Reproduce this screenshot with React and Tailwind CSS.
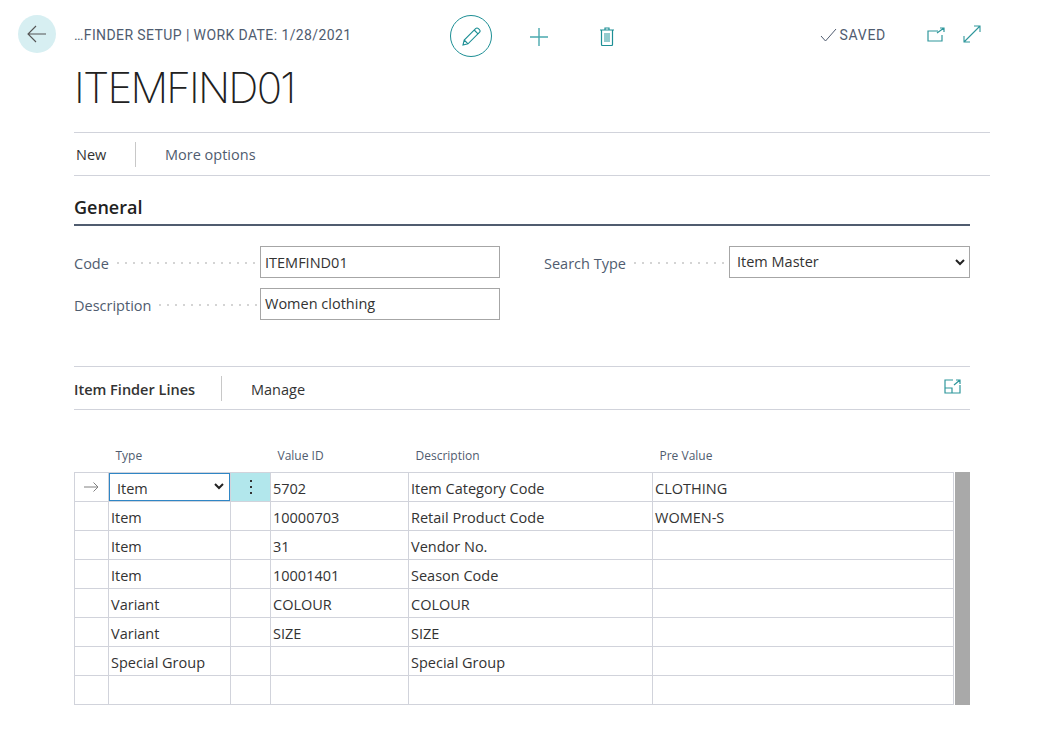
import React from 'react'

const teal = '#1d8f95'

// Filas de la tabla de lineas
const rows = [
    { type: 'Item', valueId: '10000703', description: 'Retail Product Code', pre: 'WOMEN-S' },
    { type: 'Item', valueId: '31', description: 'Vendor No.', pre: '' },
    { type: 'Item', valueId: '10001401', description: 'Season Code', pre: '' },
    { type: 'Variant', valueId: 'COLOUR', description: 'COLOUR', pre: '' },
    { type: 'Variant', valueId: 'SIZE', description: 'SIZE', pre: '' },
    { type: 'Special Group', valueId: '', description: 'Special Group', pre: '' },
    { type: '', valueId: '', description: '', pre: '' },
]

function Chevron() {
    return (
        <svg width="10" height="7" viewBox="0 0 10 7" fill="none" stroke="#222" strokeWidth="2">
            <path d="M1 1l4 4 4-4" />
        </svg>
    )
}

function Field({ label, children, labelWidth = 'w-[186px]' }) {
    return (
        <div className="flex items-center h-8">
            <div className={`${labelWidth} flex items-center shrink-0 pr-[3px] pt-[3px] text-[#505c6f]`}>
                <span className="pr-2">{label}</span>
                <span className="flex-1 h-[2px] -mt-0.5 bg-[linear-gradient(to_right,#d4d4d4_2px,transparent_2px)] bg-[length:8px_2px]"></span>
            </div>
            {children}
        </div>
    )
}

function Cell({ children, className = '' }) {
    return <td className={`h-[29px] p-0 pl-[2px] pt-1 leading-5 border border-[#d1d3db] text-[#333] ${className}`}>{children}</td>
}

export default function App() {
    return (
        <div className="w-[1064px] h-[740px] overflow-hidden bg-white text-[14.5px] font-['Open_Sans',sans-serif]">
            {/* Cabecera */}
            <div className="flex h-[132px] pl-[18px] pr-[83px]">
                <div className="w-[38px] h-[38px] mt-[15px] rounded-full bg-[#d7eff2] flex items-center justify-center shrink-0">
                    <svg width="20" height="18" viewBox="0 0 20 18" fill="none" stroke="#555" strokeWidth="1.1">
                        <path d="M19 9H1M9 1 1 9l8 8" />
                    </svg>
                </div>
                <div className="ml-[18px] w-[376px] shrink-0">
                    <div className="mt-[25px] h-5 leading-5 text-[14px] font-['Roboto',sans-serif] tracking-[0.4px] text-[#505c6f] whitespace-nowrap">
                        …FINDER SETUP | WORK DATE: 1/28/2021
                    </div>
                    <div className="mt-[15px] text-[42px] leading-[56px] font-extralight tracking-[-1.8px] text-[#212121] font-['Inter',sans-serif] whitespace-nowrap">ITEMFIND01</div>
                </div>
                <div className="flex items-start mt-[15px]">
                    <div className="w-[42px] h-[42px] rounded-full border border-[#1d8f95] flex items-center justify-center">
                        <svg width="19" height="19" viewBox="0 0 19 19" fill="none" stroke={teal} strokeWidth="1.1">
                            <path d="M1 18l1.2-5L13.6 1.6c.8-.8 2-.8 2.8 0l1 1c.8.8.8 2 0 2.8L6 16.8 1 18zM2.200 13 6 16.800M12.200 3l3.800 3.800" />
                        </svg>
                    </div>
                    <svg className="ml-[37px] mt-3" width="20" height="20" viewBox="0 0 20 20" fill="none" stroke="#4aa9ae" strokeWidth="1.4">
                        <path d="M10 1v18M1 10h18" />
                    </svg>
                    <svg className="ml-[51px] mt-3" width="14" height="19" viewBox="0 0 14 19" fill="none" stroke={teal} strokeWidth="1.2">
                        <path d="M0 3h14M5 3V1h4v2M1.500 3v14.500c0 .5.4 1 1 1h9c.6 0 1-.5 1-1V3" />
                        <path d="M5 6v9M7 6v9M9 6v9" stroke="#4aa9ae" />
                    </svg>
                </div>
                <div className="flex items-start ml-auto mt-[26px]">
                    <svg className="mt-[2px]" width="17" height="14" viewBox="0 0 17 14" fill="none" stroke="#505c6f" strokeWidth="1">
                        <path d="M1 8l4.500 5L16 1" />
                    </svg>
                    <span className="ml-[3px] leading-[18px] text-[14px] font-['Roboto',sans-serif] tracking-[0.7px] text-[#505c6f]">SAVED</span>
                    <svg className="ml-[41px] mt-[1px]" width="18" height="15" viewBox="0 0 18 15" fill="none" stroke="#2f979c" strokeWidth="1.2">
                        <path d="M11 4H1v10h14V8M10 6l7-5M13 1h4v4" />
                    </svg>
                    <svg className="ml-[18px] -mt-[1px]" width="18" height="18" viewBox="0 0 18 18" fill="none" stroke="#2f979c" strokeWidth="1.1">
                        <path d="M1 17 17 1M11 1h6v6M1 11v6h6" />
                    </svg>
                </div>
            </div>

            {/* Barra de acciones */}
            <div className="ml-[74px] w-[916px] h-11 border-y border-[#d1d3db] flex items-center">
                <span className="ml-0.5 w-[59px] pt-0.5 text-[#333]">New</span>
                <span className="h-[25px] border-l border-[#c8c8c8]"></span>
                <span className="ml-[29px] pt-0.5 text-[#505c6f]">More options</span>
            </div>

            <div className="ml-[74px] w-[896px]">
                {/* General */}
                <div className="h-[50px] pt-[19px] border-b-2 border-[#505c6f] text-[18px] leading-6 font-semibold text-[#212121]">
                    General
                </div>
                <div className="flex pt-[20px] h-[141px] border-b border-[#d1d3db]">
                    <div className="w-[426px] flex flex-col gap-2.5">
                        <Field label="Code">
                            <div className="w-[240px] h-8 border border-[#a6a6a6] px-1 pt-px leading-[30px] text-[#333]">ITEMFIND01</div>
                        </Field>
                        <Field label="Description">
                            <div className="w-[240px] h-8 border border-[#a6a6a6] px-1 leading-[30px] text-[#333]">Women clothing</div>
                        </Field>
                    </div>
                    <div className="ml-11">
                        <Field label="Search Type" labelWidth="w-[185px]">
                            <div className="w-[241px] h-8 border border-[#a6a6a6] pl-[7px] pr-1 flex items-center justify-between text-[#333]">
                                <span>Item Master</span>
                                <Chevron />
                            </div>
                        </Field>
                    </div>
                </div>

                {/* Lineas */}
                <div className="h-[43px] border-b border-[#d1d3db] flex items-center">
                    <span className="w-[147px] pt-[3px] font-semibold text-[#333]">Item Finder Lines</span>
                    <span className="h-[25px] border-l border-[#c8c8c8]"></span>
                    <span className="ml-[29px] pt-[3px] text-[#333]">Manage</span>
                    <svg className="ml-auto mr-[9px] -mt-1" width="17" height="15" viewBox="0 0 17 15" fill="none" stroke="#2f979c" strokeWidth="1.2">
                        <path d="M9 1H1v13h15V6M1 9h7v5M10 6l6-5M12 1h4v4" />
                    </svg>
                </div>

                <div className="flex mt-[26px]">
                    <table className="table-fixed border-collapse w-[880px] shrink-0">
                        <thead>
                            <tr className="text-[12px] text-[#505c6f] text-left">
                                <th className="w-[34px] p-0 h-[36px]"></th>
                                <th className="w-[122px] p-0 pl-[7px] pt-1 h-[36px] font-normal">Type</th>
                                <th className="w-[40px] p-0"></th>
                                <th className="w-[138px] p-0 pl-[7px] pt-1 font-normal">Value ID</th>
                                <th className="w-[244px] p-0 pl-[7px] pt-1 font-normal">Description</th>
                                <th className="p-0 pl-[7px] pt-1 font-normal">Pre Value</th>
                            </tr>
                        </thead>
                        <tbody>
                            <tr>
                                <td className="h-[29px] p-0 border border-[#d1d3db]">
                                    <svg className="mx-auto" width="15" height="10" viewBox="0 0 15 10" fill="none" stroke="#808080" strokeWidth="1">
                                        <path d="M0 5h14M9.500 .5 14 5l-4.500 4.500" />
                                    </svg>
                                </td>
                                <td className="h-[29px] p-0 border border-[#d1d3db]">
                                    <div className="h-[28px] border border-[#2f86c5] pl-[7px] pr-[5px] flex items-center justify-between text-[#333]">
                                        <span className="pt-1">Item</span>
                                        <Chevron />
                                    </div>
                                </td>
                                <td className="h-[29px] p-0 border border-[#d1d3db] bg-[#b2e7ec]">
                                    <div className="flex flex-col items-center gap-[4px]">
                                        <span className="w-[2px] h-[2px] bg-[#333]"></span>
                                        <span className="w-[2px] h-[2px] bg-[#333]"></span>
                                        <span className="w-[2px] h-[2px] bg-[#333]"></span>
                                    </div>
                                </td>
                                <Cell>5702</Cell>
                                <Cell>Item Category Code</Cell>
                                <Cell>CLOTHING</Cell>
                            </tr>
                            {rows.map((row, index) => (
                                <tr key={index}>
                                    <Cell></Cell>
                                    <Cell>{row.type}</Cell>
                                    <Cell></Cell>
                                    <Cell>{row.valueId}</Cell>
                                    <Cell>{row.description}</Cell>
                                    <Cell>{row.pre}</Cell>
                                </tr>
                            ))}
                        </tbody>
                    </table>
                    <div className="w-[15px] ml-px mt-[36px] h-[233px] bg-[#a9a9a9]"></div>
                </div>
            </div>
        </div>
    )
}
